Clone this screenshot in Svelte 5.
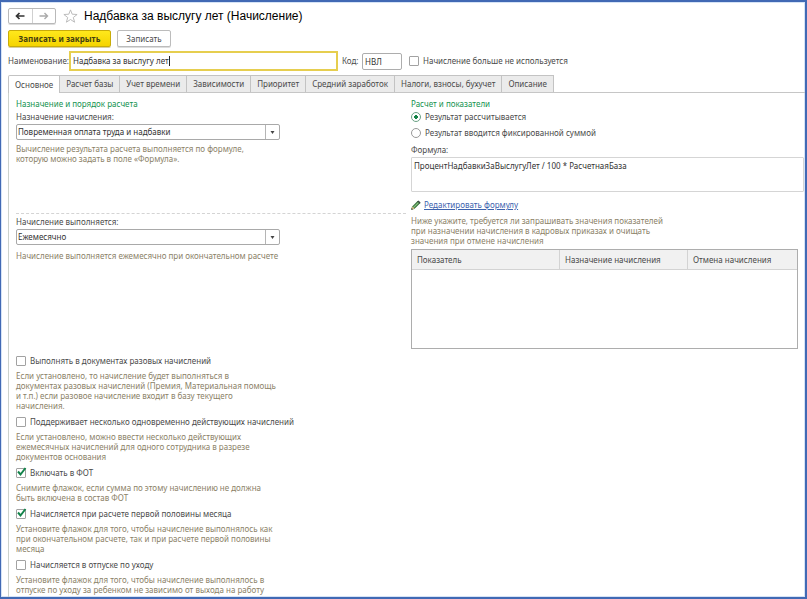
<script>
  let name = $state('Надбавка за выслугу лет');
  let code = $state('НВЛ');
  let retired = $state(false);
  let mode = $state('calc');
  let formula = $state('ПроцентНадбавкиЗаВыслугуЛет / 100 * РасчетнаяБаза');
  let active = $state(0);
  const tabs = ['Основное', 'Расчет базы', 'Учет времени', 'Зависимости', 'Приоритет', 'Средний заработок', 'Налоги, взносы, бухучет', 'Описание'];
  let options = $state([
    { label: 'Выполнять в документах разовых начислений', on: false,
      hint: ['Если установлено, то начисление будет выполняться в', 'документах разовых начислений (Премия, Материальная помощь', 'и т.п.) если разовое начисление входит в базу текущего', 'начисления.'] },
    { label: 'Поддерживает несколько одновременно действующих начислений', on: false,
      hint: ['Если установлено, можно ввести несколько действующих', 'ежемесячных начислений для одного сотрудника в разрезе', 'документов основания'] },
    { label: 'Включать в ФОТ', on: true,
      hint: ['Снимите флажок, если сумма по этому начислению не должна', 'быть включена в состав ФОТ'] },
    { label: 'Начисляется при расчете первой половины месяца', on: true,
      hint: ['Установите флажок для того, чтобы начисление выполнялось как', 'при окончательном расчете, так и при расчете первой половины', 'месяца'] },
    { label: 'Начисляется в отпуске по уходу', on: false,
      hint: ['Установите флажок для того, чтобы начисление выполнялось в', 'отпуске по уходу за ребенком не зависимо от выхода на работу'] }
  ]);
</script>

{#snippet hintText(lines)}
  <p class="hint">{#each lines as line}<span>{line}</span>{/each}</p>
{/snippet}

{#snippet dropdown(id, value)}
  <div class="combo">
    <select {id}><option>{value}</option></select>
    <span class="arrow"><svg width="5" height="3" viewBox="0 0 5 3"><path d="M.5 0h4L2.5 3z" fill="#444" /></svg></span>
  </div>
{/snippet}

<main>
  <header>
    <div class="nav">
      <button aria-label="Назад"><svg width="10" height="8" viewBox="0 0 10 8"><path d="M9.5 4H1.5M4.500 1L1.500 4l3 3" fill="none" stroke="#333" stroke-width="1.7" /></svg></button>
      <button aria-label="Вперед"><svg width="10" height="8" viewBox="0 0 10 8"><path d="M.5 4h8M5.500 1l3 3-3 3" fill="none" stroke="#aaa" stroke-width="1.4" /></svg></button>
    </div>
    <button class="star" aria-label="Избранное"><svg width="15" height="14" viewBox="0 0 15 14"><path d="M7.500 .9l1.700 4.300 4.900.3-3.800 3 1.300 4.700-4.100-2.700-4.100 2.700 1.300-4.700-3.800-3 4.900-.3z" fill="#fff" stroke="#b4b4b4" stroke-width=".9" /></svg></button>
    <h1>Надбавка за выслугу лет (Начисление)</h1>
  </header>

  <div class="commands">
    <button class="primary">Записать и закрыть</button>
    <button class="plain">Записать</button>
  </div>

  <div class="fields">
    <label for="name" class="name-label">Наименование:</label>
    <div class="name">
      <input id="name" bind:value={name} />
      <i class="caret"></i>
    </div>
    <label for="code" class="code-label">Код:</label>
    <input id="code" class="code" bind:value={code} />
    <label class="check retired">
      <input type="checkbox" bind:checked={retired} />
      <span>Начисление больше не используется</span>
    </label>
  </div>

  <div class="tabs" role="tablist">
    {#each tabs as tab, i}
      <button role="tab" aria-selected={active === i} class:active={active === i} onclick={() => (active = i)}>{tab}</button>
    {/each}
  </div>

  <div class="page">
    <div class="left">
      <section class="purpose">
        <h2>Назначение и порядок расчета</h2>
        <label class="caption" for="purpose">Назначение начисления:</label>
        {@render dropdown('purpose', 'Повременная оплата труда и надбавки')}
        {@render hintText(['Вычисление результата расчета выполняется по формуле,', 'которую можно задать в поле «Формула».'])}
      </section>
      <section class="period">
        <label class="caption" for="period">Начисление выполняется:</label>
        {@render dropdown('period', 'Ежемесячно')}
        {@render hintText(['Начисление выполняется ежемесячно при окончательном расчете'])}
      </section>
      <section class="options">
        {#each options as option}
          <div>
            <label class="check">
              <input type="checkbox" bind:checked={option.on} />
              {#if option.on}
                <svg class="tick" width="12" height="12" viewBox="0 0 12 12"><path d="M2 4.500L4.500 7.500L9.500 1" fill="none" stroke="#12834a" stroke-width="2" /></svg>
              {/if}
              <span>{option.label}</span>
            </label>
            {@render hintText(option.hint)}
          </div>
        {/each}
      </section>
    </div>

    <div class="right">
      <h2>Расчет и показатели</h2>
      <label class="radio"><input type="radio" name="mode" value="calc" bind:group={mode} /><span>Результат рассчитывается</span></label>
      <label class="radio"><input type="radio" name="mode" value="fixed" bind:group={mode} /><span>Результат вводится фиксированной суммой</span></label>
      <label class="caption" for="formula">Формула:</label>
      <textarea id="formula" bind:value={formula}></textarea>
      <a class="edit" href="#formula">
        <svg width="10" height="10" viewBox="0 0 10 10"><path d="M.6 9.400l.9-3L6.800 1.100l2.100 2.100L3.600 8.500z" fill="#4d9150" stroke="#315c36" stroke-width=".6" /><path d="M6.300 1.600L7.500.4l2.100 2.100-1.200 1.200z" fill="#3b4a44" /><path d="M.6 9.400l.9-3 2.100 2.100z" fill="#e3bd84" /><path d="M2.600 7.400l4.700-4.700" stroke="#a8cf95" stroke-width=".7" /><path d="M.3 9.700l.5-1.600 1.100 1.100z" fill="#333" /></svg>
        <span>Редактировать формулу</span>
      </a>
      {@render hintText(['Ниже укажите, требуется ли запрашивать значения показателей', 'при назначении начисления в кадровых приказах и очищать', 'значения при отмене начисления'])}
      <div class="grid">
        <table>
          <thead><tr><th class="indicator">Показатель</th><th class="assign">Назначение начисления</th><th>Отмена начисления</th></tr></thead>
          <tbody></tbody>
        </table>
      </div>
    </div>
  </div>
</main>

<style>
  :global(body) { background: #fff; }
  main {
    box-sizing: border-box;
    min-height: 100vh;
    padding: 6px 0 0 7px;
    display: flex;
    flex-direction: column;
    border: 2px solid #4169b4;
    border-left-width: 1px;
    box-shadow: inset 0 0 0 1px #d5e3f6;
    font: 8px/10px "Noto Sans", "Liberation Sans", Arial, sans-serif;
    color: #4a4a4a;
    white-space: nowrap;
  }
  button, input, select, textarea { font: inherit; color: inherit; box-sizing: border-box; margin: 0; }
  h1, h2, p { margin: 0; font-weight: 400; }
  h1 { font: 12px/16px "Liberation Sans", Arial, sans-serif; color: #000; }
  h2 { font-size: 8px; line-height: 10px; color: #149350; }

  header { display: flex; align-items: center; height: 16px; }
  .nav { display: flex; width: 48px; height: 16px; box-sizing: border-box; border: 1px solid #b9b9b9; border-radius: 2px; box-shadow: 0 1px 0 #ddd; }
  .nav button { flex: 1; display: flex; align-items: center; justify-content: center; padding: 0; border: 0; background: none; }
  .nav button + button { border-left: 1px solid #d0d0d0; }
  .star { display: flex; padding: 0; margin: 0 6px 0 7px; border: 0; background: none; }

  .commands { display: flex; gap: 6px; margin-top: 6px; }
  .commands button { height: 17px; padding: 0; border-radius: 2px; }
  .primary { width: 103px; border: 1px solid #c9ac08; background: linear-gradient(#ffe81c, #f5d400); color: #454010; font-weight: 700; box-shadow: 0 1px 0 #d8cf9c; }
  .plain { width: 54px; border: 1px solid #bcbcbc; background: #fff; box-shadow: 0 1px 0 #ddd; }

  .fields { display: flex; align-items: center; height: 20px; margin-top: 4px; }
  .name-label { width: 61px; }
  .name { display: flex; align-items: center; box-sizing: border-box; width: 269px; height: 20px; padding: 0 2px; border: 2px solid #e6ce4f; color: #333; }
  .name input { field-sizing: content; max-width: 100%; padding: 0; border: 0; outline: 0; background: none; }
  .caret { width: 1px; height: 10px; background: #222; }
  .code-label { width: 20px; margin-left: 4px; }
  .code { width: 40px; height: 17px; padding: 0 2px; border: 1px solid #adadad; border-radius: 2px; color: #333; }
  .retired { margin-left: 7px; }

  .check { display: grid; grid-template-columns: 10px auto; column-gap: 4px; align-items: center; justify-content: start; height: 14px; }
  .check input { grid-area: 1 / 1; appearance: none; width: 10px; height: 10px; border: 1px solid #a2a2a2; border-radius: 1px; background: #fff; }
  .check span { grid-area: 1 / 2; }
  .tick { grid-area: 1 / 1; pointer-events: none; }

  .tabs { display: flex; margin-top: 4px; border-bottom: 1px solid #c6c6c6; }
  .tabs button { height: 17px; padding: 0 6px; border: 1px solid #c3c3c3; border-bottom: 0; border-left-width: 0; background: #ebebeb; }
  .tabs button:first-child { border-left-width: 1px; border-radius: 2px 0 0 0; }
  .tabs .active { background: #fff; margin-bottom: -1px; height: 18px; }

  .page { flex: 1; display: flex; border-left: 1px solid #ccd2cc; padding: 6px 0 0 7px; }
  .left { flex: 0 0 390px; }
  .left h2 { margin-bottom: 1px; }
  .right { flex: 1; min-width: 0; margin-left: 5px; padding-right: 1px; }
  .caption { display: block; line-height: 14px; }
  .right .caption { margin-top: 2px; }
  .hint { color: #8b8167; }
  .hint span { display: block; }

  .combo { display: grid; grid-template-columns: 1fr 14px; width: 264px; height: 16px; box-sizing: border-box; border: 1px solid #a9a9a9; border-radius: 2px; color: #333; }
  .combo select { grid-area: 1 / 1 / 2 / 3; appearance: none; border: 0; padding: 0 1px; background: none; }
  .arrow { grid-area: 1 / 2; display: flex; align-items: center; justify-content: center; border-left: 1px solid #b5b5b5; pointer-events: none; }
  .purpose { box-sizing: border-box; height: 115px; border-bottom: 1px dashed #d4d4d4; }
  .purpose .hint { margin-top: 4px; }
  .period { box-sizing: border-box; height: 140px; padding-top: 1px; }
  .period .hint { margin-top: 6px; }
  .options { display: flex; flex-direction: column; gap: 4px; }
  .options .hint { margin-top: 3px; }

  .radio { display: flex; align-items: center; gap: 4px; height: 16px; }
  .radio input { appearance: none; width: 10px; height: 10px; border: 1px solid #999; border-radius: 50%; background: #fff; }
  .radio input:checked { border-color: #6aa184; background: radial-gradient(circle, #138448 0 2px, #fff 2px); }
  textarea { display: block; width: 100%; height: 35px; padding: 3px 2px; border: 1px solid #d5d5d5; border-radius: 1px; resize: none; outline: 0; color: #333; }
  .edit { display: flex; align-items: center; gap: 3px; width: max-content; height: 12px; margin-top: 7px; color: #3c62ad; }
  .right .hint { margin-top: 5px; }
  .grid { box-sizing: border-box; height: 100px; margin: 3px 6px 0 0; border: 1px solid #adadad; }
  table { width: 100%; border-collapse: collapse; table-layout: fixed; }
  th { height: 19px; padding: 0 5px; text-align: left; font-weight: 400; background: #f1f1f1; border-bottom: 1px solid #d3d3d3; }
  th + th { border-left: 1px solid #d3d3d3; }
  .indicator { width: 137px; }
  .assign { width: 117px; }
</style>
